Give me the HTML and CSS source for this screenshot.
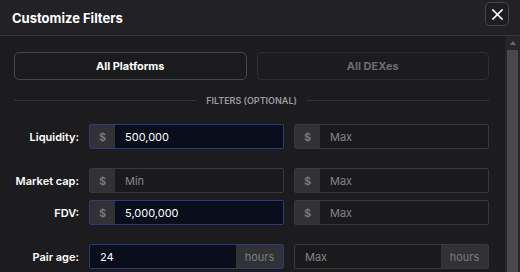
FILE: index.html
```html
<!DOCTYPE html>
<html>
<head>
    <title>Customize Filters</title>
    <link rel="stylesheet" href="styles.css">
</head>
<body>
    <div class="modal">
        <div class="modal-head">
            <h2>Customize Filters</h2>
            <div class="close-btn" aria-label="Close">
                <svg width="11" height="11" viewBox="0 0 11 11"><path d="M1 1L10 10M10 1L1 10" stroke="#fff" stroke-width="1.6" stroke-linecap="square"/></svg>
            </div>
        </div>
        <div class="modal-body">
            <div class="body-main">
                <div class="tabs">
                    <button class="tab active">All Platforms</button>
                    <button class="tab">All DEXes</button>
                </div>

                <div class="divider"><span>Filters (optional)</span></div>

                <div class="rows">
                    <div class="row">
                        <label>Liquidity:</label>
                        <div class="group filled"><span class="addon">$</span><span class="field">500,000</span></div>
                        <div class="group"><span class="addon">$</span><span class="field placeholder">Max</span></div>
                    </div>
                    <div class="row spaced">
                        <label>Market cap:</label>
                        <div class="group"><span class="addon">$</span><span class="field placeholder">Min</span></div>
                        <div class="group"><span class="addon">$</span><span class="field placeholder">Max</span></div>
                    </div>
                    <div class="row tight">
                        <label>FDV:</label>
                        <div class="group filled"><span class="addon">$</span><span class="field">5,000,000</span></div>
                        <div class="group"><span class="addon">$</span><span class="field placeholder">Max</span></div>
                    </div>
                    <div class="row spaced">
                        <label>Pair age:</label>
                        <div class="group filled"><span class="field">24</span><span class="addon wide">hours</span></div>
                        <div class="group"><span class="field placeholder">Max</span><span class="addon wide">hours</span></div>
                    </div>
                </div>
            </div>
            <div class="scrollbar">
                <div class="arrow"></div>
                <div class="thumb"></div>
            </div>
        </div>
    </div>
</body>
</html>
```

FILE: styles.css
```css
html, body {
    margin: 0;
    height: 100%;
    background-color: #1c1c1f;
    font-family: Inter, "Open Sans", sans-serif;
    color: #fff;
}
.modal {
    height: 100%;
    display: flex;
    flex-direction: column;
}
.modal-head {
    height: 35px;
    background-color: #222226;
    border-bottom: 1px solid #36363b;
    display: flex;
    align-items: center;
    justify-content: space-between;
    padding: 0 11px 0 12px;
}
.modal-head h2 {
    margin: 0;
    font-size: 13px;
    font-weight: 700;
}
.close-btn {
    width: 24px;
    height: 24px;
    box-sizing: border-box;
    margin-top: -7px;
    background: #1e1e21;
    border: 1px solid #45454a;
    border-radius: 5px;
    display: flex;
    align-items: center;
    justify-content: center;
}
.modal-body {
    flex: 1;
    display: flex;
    overflow: hidden;
}
.body-main {
    flex: 1;
    padding: 16px 16px 0 14px;
}
.tabs {
    display: flex;
    gap: 10px;
}
.tab {
    flex: 1;
    height: 28px;
    background: #1c1c1f;
    border: 1px solid #2e2e33;
    border-radius: 5px;
    color: #6c6c71;
    font-family: inherit;
    font-size: 11px;
    font-weight: 700;
}
.tab.active {
    background: #1b1b1e;
    border-color: #46464b;
    color: #fff;
}
.divider {
    display: flex;
    align-items: center;
    gap: 10px;
    margin: 15px 0 18px;
    color: #9a9a9f;
    font-size: 9px;
    font-weight: 600;
    text-transform: uppercase;
}
.divider::before,
.divider::after {
    content: "";
    flex: 1;
    height: 1px;
    background: #34343a;
}
.row {
    display: grid;
    grid-template-columns: 65px 195px 195px;
    column-gap: 10px;
    align-items: center;
}
.row.spaced {
    margin-top: 19px;
}
.row.tight {
    margin-top: 7px;
}
.row label {
    text-align: right;
    font-size: 11px;
    font-weight: 600;
    white-space: nowrap;
}
.group {
    display: flex;
    height: 25px;
    box-sizing: border-box;
    border: 1px solid #38383d;
    border-radius: 2px;
    background: #1a1a1d;
    font-size: 11px;
}
.group.filled {
    border-color: #2d3a7c;
    background: #0a0d1c;
}
.addon {
    width: 25px;
    flex: none;
    display: flex;
    align-items: center;
    justify-content: center;
    background: #323236;
    color: #7a7a7f;
    font-weight: 600;
}
.addon.wide {
    width: 47px;
    font-weight: 400;
}
.field {
    flex: 1;
    display: flex;
    align-items: center;
    padding-left: 10px;
    color: #fff;
}
.field.placeholder {
    color: #85858a;
}
.scrollbar {
    width: 15px;
    background: #26262a;
    display: flex;
    flex-direction: column;
    align-items: center;
}
.arrow {
    margin-top: 5px;
    width: 0;
    height: 0;
    border-left: 3px solid transparent;
    border-right: 3px solid transparent;
    border-bottom: 4px solid #6a6a6f;
}
.thumb {
    margin-top: 5px;
    width: 11px;
    flex: 1;
    background: #48484d;
}
```
